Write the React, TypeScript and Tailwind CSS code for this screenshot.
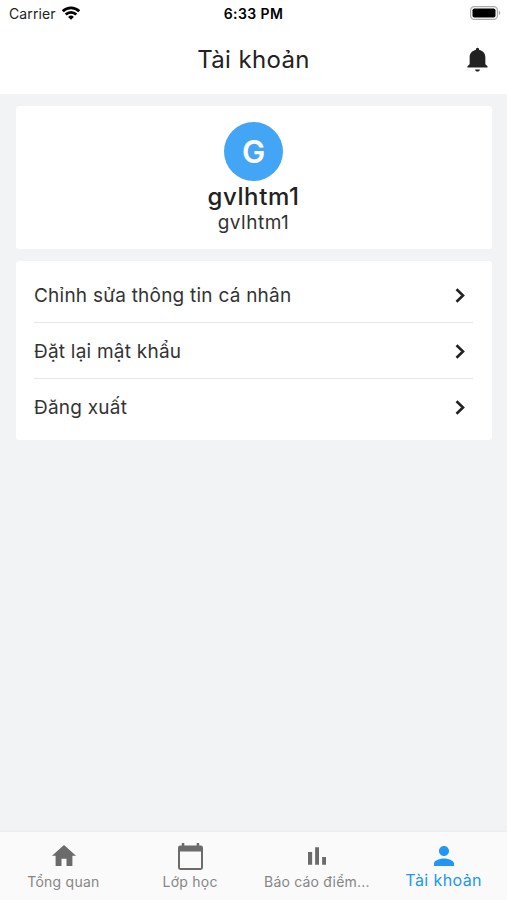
import { useState } from 'react'
import { MdPerson } from 'react-icons/md'

const menuItems = ['Chỉnh sửa thông tin cá nhân', 'Đặt lại mật khẩu', 'Đăng xuất']

const HomeIcon = () => (
  <svg viewBox="0 0 24 21" className="ml-px mb-px w-6 h-[21px]" fill="currentColor">
    <path d="M12 0 24 10.8h-3.6V21h-5.9v-7.2h-5V21H3.6V10.8H0z" />
  </svg>
)

const CalendarIcon = () => (
  <svg viewBox="0 0 25 27" className="w-[25px] h-[27px]" fill="currentColor">
    <path d="M22.6 2.4h-1.4V0h-2.5v2.4H6.3V0H3.8v2.4H2.4A2.4 2.4 0 0 0 0 4.8v19.8A2.4 2.4 0 0 0 2.4 27h20.2a2.4 2.4 0 0 0 2.4-2.4V4.8a2.4 2.4 0 0 0-2.4-2.4zM23 24.9H2V8.5h21z" />
  </svg>
)

const BarsIcon = () => (
  <svg viewBox="0 0 24 24" className="w-[30px] h-[30px]" fill="currentColor">
    <path d="M4.8 8.7h3.3V19H4.8zM10.5 5h3.1v14h-3.1zm5.6 7.8h3.1V19h-3.1z" />
  </svg>
)

const BellIcon = () => (
  <svg viewBox="0 0 24 24" className="w-[29px] h-[29px]" fill="currentColor">
    <path d="M12 22c1.1 0 2-.8 2-1.7h-4c0 .9.9 1.7 2 1.7zM20.3 17.6v1H3.7v-1l1.8-1.6V10c0-3 1.9-5.2 5.1-5.8V3.7a1.4 1.4 0 0 1 2.8 0v.5c3.2.6 5.1 2.8 5.1 5.8v6z" />
  </svg>
)

const ChevronIcon = () => (
  <svg viewBox="0 0 10 15" className="mr-[8.5px] mt-px h-[15px] w-[10px]" fill="none" stroke="currentColor" strokeWidth="2.6">
    <path d="M1.5 1.2 8 7.5l-6.5 6.3" />
  </svg>
)

const tabs = [
  { label: 'Tổng quan', icon: <HomeIcon />, text: 'text-[14px] tracking-[0.25px]' },
  { label: 'Lớp học', icon: <CalendarIcon />, text: 'text-[14px] tracking-[0.25px]' },
  { label: 'Báo cáo điểm...', icon: <BarsIcon />, text: 'text-[14px] tracking-[0.2px]' },
  { label: 'Tài khoản', icon: <MdPerson className="w-[30px] h-[30px]" />, text: 'text-[16px] tracking-[0.4px]' },
]

const StatusBar = () => (
  <div className="relative flex h-7 items-center justify-between pl-[9px] pr-[6px]">
    <div className="-mt-0.5 flex items-center gap-[6px] text-[14px] tracking-[0.1px] text-[#222]">
      <span>Carrier</span>
      <svg viewBox="0 0 18 14" className="w-[18px] h-[14px] -mt-px" fill="none" stroke="#000" strokeWidth="2.8">
        <path d="M.8 5.2a11.6 11.6 0 0 1 16.4 0" />
        <path d="M3.7 8.5a7.5 7.5 0 0 1 10.6 0" />
        <path d="M9 13.8 6.1 10.9a4.1 4.1 0 0 1 5.8 0z" fill="#000" stroke="none" />
      </svg>
    </div>
    <span className="absolute left-1/2 top-[3px] -translate-x-1/2 whitespace-nowrap text-[14px] font-semibold tracking-[0.4px] text-black">
      6:33 PM
    </span>
    <svg viewBox="0 0 31 14" className="w-[31px] h-[14px] -mt-0.5">
      <rect x=".6" y=".6" width="26.8" height="12.8" rx="3.6" fill="#fff" stroke="#aaa" strokeWidth="1.2" />
      <rect x="2.5" y="2.5" width="23" height="9" rx="1.8" />
      <path d="M28.8 4.8c2 .6 2 3.8 0 4.4z" fill="#aaa" />
    </svg>
  </div>
)

export default function App() {
  const [active, setActive] = useState(3)

  return (
    <div className="flex h-[900px] w-[507px] flex-col bg-[#f1f3f5] font-['Inter',sans-serif] text-[#222]">
      <header className="h-[94px] bg-white">
        <StatusBar />
        <div className="relative flex h-[64px] items-center justify-center">
          <h1 className="text-[24px] tracking-[0.35px]">Tài khoản</h1>
          <button className="absolute right-[15px] top-[17px]">
            <BellIcon />
          </button>
        </div>
      </header>

      <main className="flex flex-1 flex-col gap-3 px-[15.5px] pt-3">
        <section className="flex h-[143px] flex-col items-center rounded-[3px] bg-white pt-4">
          <div className="flex h-[59px] w-[59px] items-center justify-center rounded-full bg-[#42a5f5] pt-0.5 text-[31px] font-semibold text-white">
            G
          </div>
          <p className="text-[24px] leading-8 font-medium tracking-[0.6px]">gvlhtm1</p>
          <p className="text-[19px] leading-5 tracking-[0.5px] text-[#333]">gvlhtm1</p>
        </section>

        <section className="h-[179px] rounded-[3px] bg-white px-[18.5px] pt-[6px]">
          {menuItems.map((item) => (
            <button
              key={item}
              className="flex h-14 w-full items-center justify-between border-b border-[#e4e5e6] text-left last:border-transparent"
            >
              <span className="mt-[3px] text-[19px] tracking-[0.23px] text-[#333]">{item}</span>
              <ChevronIcon />
            </button>
          ))}
        </section>
      </main>

      <nav className="grid h-[68px] grid-cols-4 bg-[#fafafa] shadow-[0_-1px_2px_rgba(0,0,0,0.04)]">
        {tabs.map((tab, i) => (
          <button
            key={tab.label}
            onClick={() => setActive(i)}
            className={`flex flex-col items-center pt-[9px] ${i === active ? 'text-[#2196f3]' : 'text-[#6b6b6b]'}`}
          >
            <span className="flex h-[30px] items-center">{tab.icon}</span>
            <span
              className={`whitespace-nowrap ${tab.text} ${i === active ? 'leading-[19px]' : 'leading-[22px] text-[#868686]'}`}
            >
              {tab.label}
            </span>
          </button>
        ))}
      </nav>
    </div>
  )
}
